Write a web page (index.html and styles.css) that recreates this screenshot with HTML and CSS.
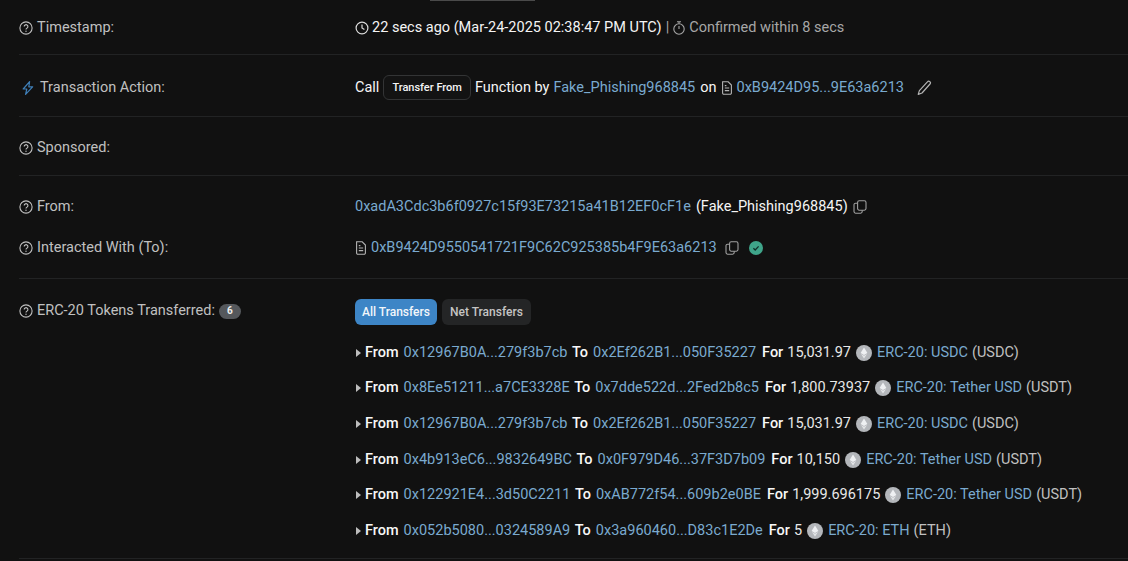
FILE: index.html
```html
<!DOCTYPE html>
<html lang="en">
<head>
<meta charset="utf-8">
<title>Transaction Details</title>
<link rel="stylesheet" href="styles.css">
</head>
<body>
<svg class="defs" width="0" height="0" aria-hidden="true">
  <symbol id="q" viewBox="0 0 14 14"><circle cx="7" cy="7" r="6.1" fill="none" stroke="currentColor" stroke-width="1.1"/><path d="M5.2 5.5a1.85 1.85 0 1 1 2.8 1.6c-.6.35-1 .7-1 1.4" fill="none" stroke="currentColor" stroke-width="1.1"/><circle cx="7" cy="10.3" r=".7" fill="currentColor"/></symbol>
  <symbol id="doc" viewBox="0 0 12 14"><path d="M1.6.8h5.6l3.2 3.2v8a1.2 1.2 0 0 1-1.2 1.2H2.8A1.2 1.2 0 0 1 1.6 12z" fill="none" stroke="currentColor" stroke-width="1.1"/><path d="M3.8 7h4.4M3.8 9.6h4.4M3.8 4.6h1.6" stroke="currentColor" stroke-width="1.1"/></symbol>
  <symbol id="copy" viewBox="0 0 14 14"><rect x="4.6" y=".8" width="8.4" height="9.4" rx="1.6" fill="none" stroke="currentColor" stroke-width="1.1"/><path d="M4.6 3.2H2.6A1.6 1.6 0 0 0 1 4.8v6.8a1.6 1.6 0 0 0 1.6 1.6h5a1.6 1.6 0 0 0 1.6-1.6v-1.4" fill="none" stroke="currentColor" stroke-width="1.1"/></symbol>
  <symbol id="token" viewBox="0 0 16 16"><circle cx="8" cy="8" r="8" fill="#b4b7bb"/><path d="M8 2.6 11.4 8 8 10 4.6 8z" fill="#eef0f2"/><path d="M8 10.8 11 9 8 13.4 5 9z" fill="#e4e6e8"/></symbol>
</svg>
<main class="card">
  <div class="top-mark"></div>

  <section class="row row-time">
    <div class="label"><svg class="ic-q"><use href="#q"/></svg>Timestamp:</div>
    <div class="value">
      <svg class="ic-clock" viewBox="0 0 14 14"><circle cx="7" cy="7" r="5.9" fill="none" stroke="currentColor" stroke-width="1.2"/><path d="M7 3.4V7l2.4 1.5" fill="none" stroke="currentColor" stroke-width="1.2"/></svg>
      <span class="t-main">22 secs ago (Mar-24-2025 02:38:47 PM UTC)</span>
      <span class="muted sep-bar">|</span>
      <svg class="ic-watch" viewBox="0 0 14 14"><circle cx="7" cy="8" r="5.2" fill="none" stroke="currentColor" stroke-width="1.1"/><path d="M5 .8h4M7 1v1.6M7 5v3" fill="none" stroke="currentColor" stroke-width="1.1"/></svg>
      <span class="muted">Confirmed within 8 secs</span>
    </div>
  </section>

  <section class="row row-action">
    <div class="label"><svg class="ic-bolt" viewBox="0 0 14 14"><path d="M8.6.6 2.2 8h3.6L4.6 13.4 11.6 5.8H7.8z" fill="none" stroke="#3f7fb8" stroke-width="1.2" stroke-linejoin="round"/></svg>Transaction Action:</div>
    <div class="value">
      <span class="t-main">Call</span>
      <span class="fn-pill">Transfer From</span>
      <span class="t-main">Function by</span>
      <a class="link">Fake_Phishing968845</a>
      <span class="t-main on">on</span>
      <svg class="ic-doc"><use href="#doc"/></svg>
      <a class="link">0xB9424D95...9E63a6213</a>
      <svg class="ic-pen" viewBox="0 0 16 16"><path d="M11.4 1.8a1.7 1.7 0 0 1 2.6 2.2L6 13l-3.8 1.4L3.4 10.6z" fill="none" stroke="currentColor" stroke-width="1.2" stroke-linejoin="round"/></svg>
    </div>
  </section>

  <section class="row row-sponsored">
    <div class="label"><svg class="ic-q"><use href="#q"/></svg>Sponsored:</div>
    <div class="value"></div>
  </section>

  <section class="row-group">
    <div class="row row-from">
      <div class="label"><svg class="ic-q"><use href="#q"/></svg>From:</div>
      <div class="value">
        <a class="link">0xadA3Cdc3b6f0927c15f93E73215a41B12EF0cF1e</a>
        <span class="t-main name">(Fake_Phishing968845)</span>
        <svg class="ic-copy"><use href="#copy"/></svg>
      </div>
    </div>
    <div class="row row-to">
      <div class="label"><svg class="ic-q"><use href="#q"/></svg>Interacted With (To):</div>
      <div class="value">
        <svg class="ic-doc"><use href="#doc"/></svg>
        <a class="link">0xB9424D9550541721F9C62C925385b4F9E63a6213</a>
        <svg class="ic-copy wide"><use href="#copy"/></svg>
        <svg class="ic-check" viewBox="0 0 14 14"><circle cx="7" cy="7" r="7" fill="#3fa58a"/><path d="M4.4 7.2 6.2 9l3.4-3.6" fill="none" stroke="#10302a" stroke-width="1.3"/></svg>
      </div>
    </div>
  </section>

  <section class="row row-tokens">
    <div class="label"><svg class="ic-q"><use href="#q"/></svg>ERC-20 Tokens Transferred:<span class="count">6</span></div>
    <div class="tokens">
      <div class="tabs"><span class="tab active">All Transfers</span><span class="tab">Net Transfers</span></div>
      <ul class="transfers">
        <li><i class="caret"></i><b>From</b><a class="link">0x12967B0A...279f3b7cb</a><b>To</b><a class="link">0x2Ef262B1...050F35227</a><b>For</b><span class="amt">15,031.97</span><svg class="token"><use href="#token"/></svg><a class="link">ERC-20: USDC</a><span class="sym">(USDC)</span></li>
        <li><i class="caret"></i><b>From</b><a class="link">0x8Ee51211...a7CE3328E</a><b>To</b><a class="link">0x7dde522d...2Fed2b8c5</a><b>For</b><span class="amt">1,800.73937</span><svg class="token"><use href="#token"/></svg><a class="link">ERC-20: Tether USD</a><span class="sym">(USDT)</span></li>
        <li><i class="caret"></i><b>From</b><a class="link">0x12967B0A...279f3b7cb</a><b>To</b><a class="link">0x2Ef262B1...050F35227</a><b>For</b><span class="amt">15,031.97</span><svg class="token"><use href="#token"/></svg><a class="link">ERC-20: USDC</a><span class="sym">(USDC)</span></li>
        <li><i class="caret"></i><b>From</b><a class="link">0x4b913eC6...9832649BC</a><b>To</b><a class="link">0x0F979D46...37F3D7b09</a><b>For</b><span class="amt">10,150</span><svg class="token"><use href="#token"/></svg><a class="link">ERC-20: Tether USD</a><span class="sym">(USDT)</span></li>
        <li><i class="caret"></i><b>From</b><a class="link">0x122921E4...3d50C2211</a><b>To</b><a class="link">0xAB772f54...609b2e0BE</a><b>For</b><span class="amt">1,999.696175</span><svg class="token"><use href="#token"/></svg><a class="link">ERC-20: Tether USD</a><span class="sym">(USDT)</span></li>
        <li><i class="caret"></i><b>From</b><a class="link">0x052b5080...0324589A9</a><b>To</b><a class="link">0x3a960460...D83c1E2De</a><b>For</b><span class="amt">5</span><svg class="token"><use href="#token"/></svg><a class="link">ERC-20: ETH</a><span class="sym">(ETH)</span></li>
      </ul>
    </div>
  </section>
</main>
</body>
</html>
```
FILE: styles.css
```css
* { box-sizing: border-box; }
html, body { margin: 0; height: 100%; background: #111111; overflow: hidden; }
body {
  font-family: Roboto, "Liberation Sans", sans-serif;
  font-size: 14.5px;
  line-height: 20px;
  color: #f5f5f5;
}
.defs { position: absolute; }
.card { padding-left: 19px; position: relative; }
.top-mark {
  position: absolute; left: 430px; top: 0; width: 105px; height: 1px; background: #4a4a4a;
}
.row {
  display: grid;
  grid-template-columns: 336px 1fr;
  align-items: start;
}
.row-time, .row-action, .row-sponsored, .row-group, .row-tokens { border-bottom: 1px solid #222324; }
.row-time { height: 55px; padding-top: 18px; }
.row-action { height: 62px; padding-top: 23px; }
.row-action .value { margin-top: -3px; }
.row-sponsored { height: 59px; padding-top: 21px; }
.row-group { height: 103px; padding-top: 21px; display: flex; flex-direction: column; gap: 21px; }
.row-tokens { height: 280px; padding-top: 22px; }
.label { display: flex; align-items: center; color: #c0c0c0; white-space: nowrap; }
.ic-q { width: 14px; height: 14px; margin-right: 4px; color: #c0c0c0; flex: none; }
.ic-bolt { width: 14px; height: 14px; margin: 0 5px 0 2px; flex: none; }
.value { display: flex; align-items: center; white-space: nowrap; }
.muted { color: #a7a7a7; }
.t-main { color: #f5f5f5; }
.link { color: #7aaacf; }
.ic-clock { width: 14px; height: 14px; margin-right: 3px; color: #dcdcdc; }
.sep-bar { margin: 0 2px 0 4px; }
.ic-watch { width: 14px; height: 14px; margin: 0 3px 0 1px; color: #a7a7a7; }
.fn-pill {
  margin: 0 4px 0 4px;
  height: 25px;
  padding: 0 8px;
  display: inline-flex;
  align-items: center;
  font-size: 11px;
  font-weight: 500;
  border: 1px solid #333435;
  border-radius: 6px;
  background: #131313;
}
.row-action .t-main + .link { margin-left: 4px; }
.on { margin: 0 4px 0 5px; }
.ic-doc { width: 12px; height: 14px; margin-right: 4px; color: #b4b4b4; flex: none; }
.ic-pen { width: 16px; height: 16px; margin-left: 12px; color: #b4b4b4; }
.name { margin-left: 5px; }
.ic-copy { width: 14px; height: 14px; margin-left: 5px; color: #a0a0a0; }
.ic-copy.wide { margin-left: 8px; }
.ic-check { width: 14px; height: 14px; margin-left: 10px; }
.count {
  margin-left: 4px; width: 22px; height: 15px; border-radius: 8px;
  background: #55585c; color: #f0f0f0; font-size: 10px; font-weight: 700;
  display: inline-flex; align-items: center; justify-content: center;
}
.tabs { display: flex; gap: 5px; margin-top: -2px; }
.tab {
  height: 26px; padding: 0 8px;
  display: inline-flex; align-items: center;
  border-radius: 6px;
  background: #242526; color: #c4c4c4;
  font-size: 12px; font-weight: 500;
}
.tab.active { background: #3d85c6; color: #f2f6fa; padding: 0 7px; }
.transfers { list-style: none; margin: 10px 0 0 0; padding: 0; }
.transfers li { display: flex; align-items: center; height: 35.6px; white-space: nowrap; margin-left: 1px; }
.transfers b { font-weight: 500; color: #f8f8f8; margin-right: 5px; }
.transfers b:nth-of-type(3) { margin-right: 4px; }
.transfers .link { margin-right: 6px; }
.transfers .link:nth-of-type(1) { margin-right: 4.5px; }
.caret { width: 0; height: 0; border-left: 5px solid #bdbdbd; border-top: 4px solid transparent; border-bottom: 4px solid transparent; margin-right: 4px; }
.amt { color: #e8e8e8; }
.token { width: 16px; height: 16px; margin: 0 5px; flex: none; }
.sym { color: #c0c0c0; margin-left: -2px; }
```
